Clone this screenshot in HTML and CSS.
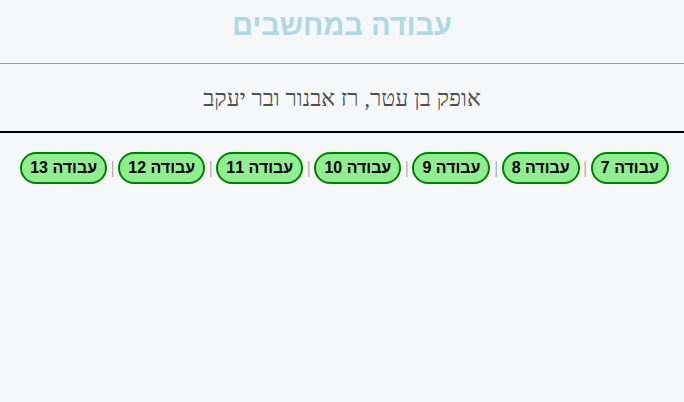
FILE: index.html
```html
<!DOCTYPE html>
<html lang="he" dir="rtl">
<head>
<meta charset="utf-8">
<title>עבודה במחשבים</title>
<link rel="stylesheet" href="styles.css">
</head>
<body>
<header class="top">
  <h1 class="title">עבודה במחשבים</h1>
</header>
<section class="authors">
  <p class="names">אופק בן עטר, רז אבנור ובר יעקב</p>
</section>
<nav class="tabs">
  <a class="tab" href="#">עבודה 7</a> | <a class="tab" href="#">עבודה 8</a> | <a class="tab" href="#">עבודה 9</a> | <a class="tab" href="#">עבודה 10</a> | <a class="tab" href="#">עבודה 11</a> | <a class="tab" href="#">עבודה 12</a> | <a class="tab" href="#">עבודה 13</a>
</nav>
</body>
</html>
```
FILE: styles.css
```css
html, body {
  margin: 0;
  padding: 0;
  background: #f6f7f9;
}
body {
  font-family: "Liberation Serif", "DejaVu Serif", serif;
  color: #555;
}
.top {
  height: 63px;
  border-bottom: 1px solid #9a9a9a;
  text-align: center;
}
.title {
  margin: 0;
  padding-top: 9px;
  font-family: "Liberation Sans", Arial, sans-serif;
  font-size: 29px;
  line-height: 32px;
  font-weight: bold;
  color: #add8e6;
}
.authors {
  height: 67px;
  border-bottom: 2px solid #000;
  text-align: center;
}
.names {
  margin: 0;
  padding-top: 22px;
  font-size: 23px;
  line-height: 26px;
  color: #4f4f4f;
}
.tabs {
  padding-top: 19px;
  padding-left: 5px;
  text-align: center;
  font-size: 16px;
  color: #8a8a9a;
}
.tab {
  display: inline-block;
  padding: 5px 8px;
  border: 2px solid #008000;
  border-radius: 18px;
  background: #90ee90;
  color: #000;
  font-family: "Liberation Sans", Arial, sans-serif;
  font-weight: bold;
  font-size: 16px;
  line-height: 18px;
  text-decoration: none;
}
```
